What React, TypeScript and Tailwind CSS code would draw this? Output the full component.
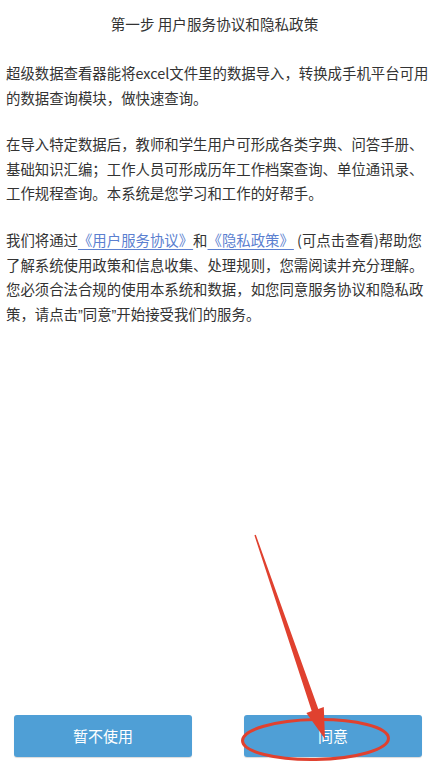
import React from "react";

const font = { fontFamily: '"Noto Sans CJK SC", "Noto Sans", sans-serif' };

function Link({ children }: { children: React.ReactNode }) {
  return (
    <span className="text-[#5b7fd0] underline decoration-[#5b7fd0] underline-offset-[3px]">
      {children}
    </span>
  );
}

function Q({ children }: { children: React.ReactNode }) {
  return <span className="font-['Liberation_Sans',sans-serif]">{children}</span>;
}

export default function App() {
  return (
    <div
      className="relative w-[429px] h-[771px] bg-white flex flex-col overflow-hidden text-[#333333]"
      style={font}
    >
      <div className="mt-[11px] h-[25px] leading-[25px] text-center text-[14.6px] text-[#333333]">
        第一步 用户服务协议和隐私政策
      </div>

      <div className="mt-[25px] px-[6px] text-[14.4px] leading-[24.6px] flex flex-col gap-[22px] whitespace-nowrap">
        <div className="flex flex-col">
          <span>超级数据查看器能将excel文件里的数据导入，转换成手机平台可用</span>
          <span>的数据查询模块，做快速查询。</span>
        </div>
        <div className="flex flex-col">
          <span>在导入特定数据后，教师和学生用户可形成各类字典、问答手册、</span>
          <span>基础知识汇编；工作人员可形成历年工作档案查询、单位通讯录、</span>
          <span>工作规程查询。本系统是您学习和工作的好帮手。</span>
        </div>
        <div className="flex flex-col">
          <span>
            我们将通过<Link>《用户服务协议》</Link>和<Link>《隐私政策》</Link> (可点击查看)帮助您
          </span>
          <span>了解系统使用政策和信息收集、处理规则，您需阅读并充分理解。</span>
          <span>您必须合法合规的使用本系统和数据，如您同意服务协议和隐私政</span>
          <span>
            策，请点击<Q>”</Q>同意<Q>”</Q>开始接受我们的服务。
          </span>
        </div>
      </div>

      <div className="mt-auto mb-[14px] pl-[14px] flex gap-[52px]">
        <button className="w-[178px] h-[42px] rounded-[3px] bg-[#4f9fd6] text-white text-[15px] shadow-[0_1px_1px_rgba(0,0,0,0.15)]">
          暂不使用
        </button>
        <button className="w-[178px] h-[42px] rounded-[3px] bg-[#4f9fd6] text-white text-[15px] shadow-[0_1px_1px_rgba(0,0,0,0.15)]">
          同意
        </button>
      </div>

      <svg
        className="absolute left-0 top-0 pointer-events-none"
        width="429"
        height="771"
        viewBox="0 0 429 771"
      >
        <ellipse
          cx="315.5"
          cy="739.5"
          rx="73"
          ry="20"
          fill="none"
          stroke="#e0412f"
          strokeWidth="3"
          transform="rotate(-1 315.5 739.5)"
        />
        <polygon
          points="254.4,535.2 255.8,534.8 318.3,708.9 323.8,707.0 325,739 306.4,712.9 311.7,711.1"
          fill="#e0412f"
        />
      </svg>
    </div>
  );
}
